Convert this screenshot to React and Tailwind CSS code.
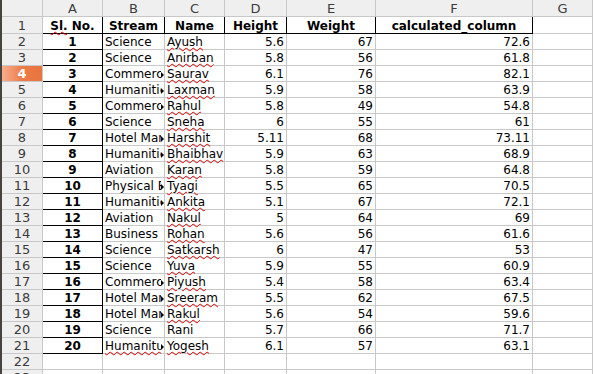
import React from "react";

const data = [
  [1, "Science", "Ayush", "5.6", "67", "72.6"],
  [2, "Science", "Anirban", "5.8", "56", "61.8"],
  [3, "Commerce", "Saurav", "6.1", "76", "82.1"],
  [4, "Humanities", "Laxman", "5.9", "58", "63.9"],
  [5, "Commerce", "Rahul", "5.8", "49", "54.8"],
  [6, "Science", "Sneha", "6", "55", "61"],
  [7, "Hotel Management", "Harshit", "5.11", "68", "73.11"],
  [8, "Humanities", "Bhaibhav", "5.9", "63", "68.9"],
  [9, "Aviation", "Karan", "5.8", "59", "64.8"],
  [10, "Physical Education", "Tyagi", "5.5", "65", "70.5"],
  [11, "Humanities", "Ankita", "5.1", "67", "72.1"],
  [12, "Aviation", "Nakul", "5", "64", "69"],
  [13, "Business", "Rohan", "5.6", "56", "61.6"],
  [14, "Science", "Satkarsh", "6", "47", "53"],
  [15, "Science", "Yuva", "5.9", "55", "60.9"],
  [16, "Commerce", "Piyush", "5.4", "58", "63.4"],
  [17, "Hotel Management", "Sreeram", "5.5", "62", "67.5"],
  [18, "Hotel Management", "Rakul", "5.6", "54", "59.6"],
  [19, "Science", "Rani", "5.7", "66", "71.7"],
  [20, "Humanitues", "Yogesh", "6.1", "57", "63.1"],
];

const overflow = (s) => s.length > 7 && s !== "Business" && s !== "Aviation" && s !== "Science";
const wavy = "underline decoration-wavy decoration-[#e00000] decoration-1 underline-offset-[1px]";

function RowHead({ n, h, sel }) {
  return (
    <div
      className={`${h} flex items-end justify-center border-r border-b border-[#c8c8c8] text-[13px] leading-[13px] pb-[1px] ${
        sel
          ? "bg-gradient-to-r from-[#f8ad8e] via-[#ec7c48] to-[#e8733d] text-white font-bold"
          : "bg-[#efefef] text-[#3c3c3c]"
      }`}
    >
      {n}
    </div>
  );
}

function Cell({ h, children, align = "left", rb = "border-r-[#c8c8c8]", bb = "border-b-[#c8c8c8]", bold, arrow }) {
  const al = align === "left" ? "justify-start pl-[2px]" : align === "right" ? "justify-end pr-[2px]" : "justify-center";
  return (
    <div
      className={`${h} relative flex items-end pb-[1px] border-r border-b ${rb} ${bb} ${al} text-[12px] leading-[12px] text-black ${
        bold ? "font-bold" : ""
      }`}
    >
      <div className={`whitespace-nowrap ${arrow ? "w-[56px] min-w-0 max-w-[56px] shrink-0 overflow-x-clip" : ""}`}>
        {children}
      </div>
      {arrow && (
        <div className="absolute right-[0px] top-[6px] w-0 h-0 border-y-[3px] border-y-transparent border-l-[3px] border-l-black" />
      )}
    </div>
  );
}

export default function App() {
  const heads = ["A", "B", "C", "D", "E", "F", "G"];
  const blk = "border-r-black";
  const blkb = "border-b-black";
  return (
    <div
      className="w-[593px] h-[374px] overflow-hidden bg-white border-l-2 border-l-[#45443f]"
      style={{ fontFamily: '"DejaVu Sans", sans-serif' }}
    >
      <div className="grid grid-cols-[41px_60px_62px_60px_62px_89px_157px_60px]">
        <div className="h-[17px] bg-[#efefef] border-r border-b border-[#c8c8c8]" />
        {heads.map((c) => (
          <div
            key={c}
            className="h-[17px] bg-[#efefef] border-r border-b border-[#c8c8c8] flex items-center justify-center pt-[1px] text-[13px] text-[#3c3c3c]"
          >
            {c}
          </div>
        ))}

        <RowHead n={1} h="h-[17px]" />
        <Cell h="h-[17px]" align="center" bold rb={blk} bb={blkb}>
          <span className={wavy}>Sl.</span> No.
        </Cell>
        <Cell h="h-[17px]" align="center" bold rb={blk} bb={blkb}>Stream</Cell>
        <Cell h="h-[17px]" align="center" bold rb={blk} bb={blkb}>Name</Cell>
        <Cell h="h-[17px]" align="center" bold rb={blk} bb={blkb}>Height</Cell>
        <Cell h="h-[17px]" align="center" bold rb={blk} bb={blkb}>Weight</Cell>
        <Cell h="h-[17px]" align="center" bold rb={blk} bb={blkb}>calculated_column</Cell>
        <Cell h="h-[17px]" />

        {data.map((r, i) => (
          <React.Fragment key={i}>
            <RowHead n={i + 2} h="h-[16px]" sel={i + 2 === 4} />
            <Cell h="h-[16px]" align="center" bold rb={blk} bb={blkb}>{r[0]}</Cell>
            <Cell h="h-[16px]" arrow={overflow(r[1])}>
              {r[1] === "Humanitues" ? <span className={wavy}>{r[1]}</span> : r[1]}
            </Cell>
            <Cell h="h-[16px]">
              {r[2] === "Rani" ? r[2] : <span className={wavy}>{r[2]}</span>}
            </Cell>
            <Cell h="h-[16px]" align="right">{r[3]}</Cell>
            <Cell h="h-[16px]" align="right">{r[4]}</Cell>
            <Cell h="h-[16px]" align="right">{r[5]}</Cell>
            <Cell h="h-[16px]" />
          </React.Fragment>
        ))}

        {[22, 23].map((n) => (
          <React.Fragment key={n}>
            <RowHead n={n} h="h-[16px]" />
            {heads.map((c) => (
              <Cell key={c} h="h-[16px]" />
            ))}
          </React.Fragment>
        ))}
      </div>
    </div>
  );
}
